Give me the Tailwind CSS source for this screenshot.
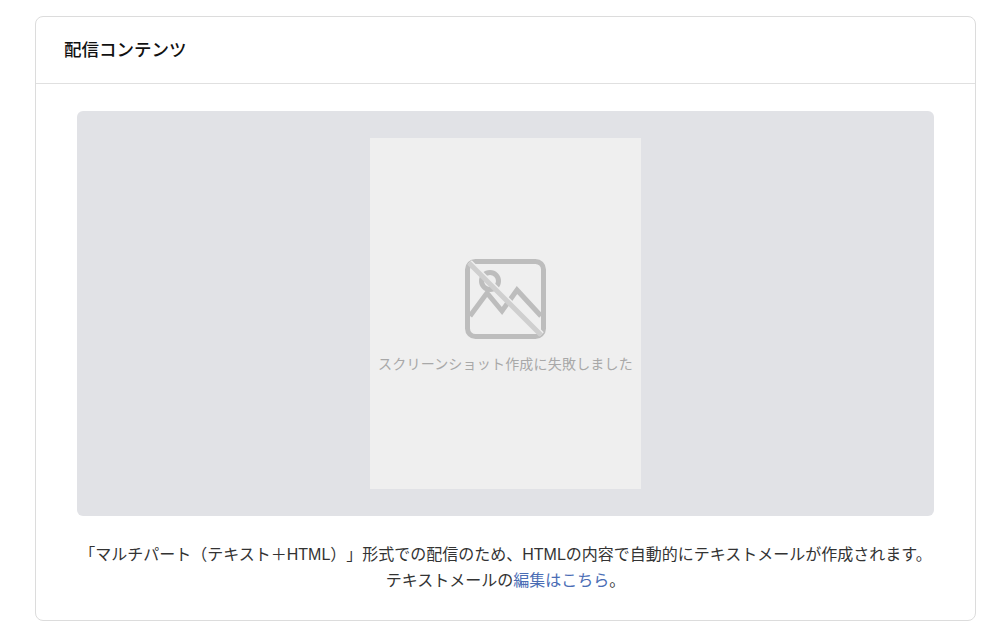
<!DOCTYPE html>
<html lang="ja">
<head>
<meta charset="UTF-8">
<title>配信コンテンツ</title>
<script src="https://cdn.jsdelivr.net/npm/@tailwindcss/browser@4"></script>
</head>
<body class="bg-white font-['Liberation_Sans','Noto_Sans_CJK_JP',sans-serif] h-[635px] overflow-hidden [text-spacing-trim:space-all]">
  <div class="ml-[35px] mt-[16px] w-[941px] h-[605px] bg-white border border-[#dcdcdc] rounded-lg flex flex-col">
    <div class="h-[67px] border-b border-[#e0e0e0] pl-[28px] flex items-center shrink-0">
      <h2 class="text-[17.5px] font-medium text-[#111]">配信コンテンツ</h2>
    </div>
    <div class="px-[41px] pt-[27px]">
      <div class="h-[405px] bg-[#e1e2e6] rounded-md flex items-center justify-center">
        <div class="w-[271px] h-[351px] bg-[#efefef] flex flex-col items-center pt-[121px]">
          <svg class="w-[81px] h-[80px]" viewBox="0 0 81 80" fill="none">
            <rect x="2.5" y="2.5" width="76" height="75" rx="8" stroke="#bdbdbd" stroke-width="5"/>
            <circle cx="25" cy="22" r="8.5" stroke="#bdbdbd" stroke-width="5"/>
            <path d="M5 57L22 34L37 52L52 31L76 57" stroke="#bdbdbd" stroke-width="5"/>
            <path d="M5 3L77 75" stroke="#efefef" stroke-width="5"/>
            <path d="M4 4L76 76" stroke="#cfcfcf" stroke-width="5"/>
          </svg>
          <p class="mt-[14px] text-[14px] leading-[22px] tracking-[0.2px] text-[#a8a8a8] whitespace-nowrap">スクリーンショット作成に失敗しました</p>
        </div>
      </div>
      <div class="mt-[26px] text-center text-[16px] leading-[26px] text-[#333]">
        <p class="whitespace-nowrap">「マルチパート（テキスト＋HTML）」形式での配信のため、HTMLの内容で自動的にテキストメールが作成されます。</p>
        <p>テキストメールの<a href="#" class="text-[#4a6db5]">編集はこちら</a>。</p>
      </div>
    </div>
  </div>
</body>
</html>
